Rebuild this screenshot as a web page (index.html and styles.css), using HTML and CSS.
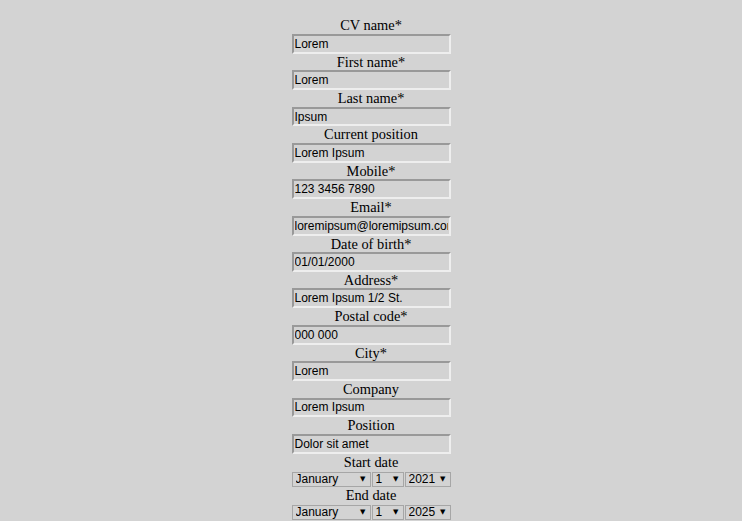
FILE: index.html
```html
<!DOCTYPE html>
<html lang="en">
<head>
<meta charset="utf-8">
<title>CV form</title>
<link rel="stylesheet" href="styles.css">
</head>
<body>
<form class="cv-form">
  <label class="field-label" for="cvname">CV name*</label>
  <input class="field-input" id="cvname" type="text" value="Lorem">
  <label class="field-label" for="firstname">First name*</label>
  <input class="field-input" id="firstname" type="text" value="Lorem">
  <label class="field-label" for="lastname">Last name*</label>
  <input class="field-input" id="lastname" type="text" value="Ipsum">
  <label class="field-label" for="curpos">Current position</label>
  <input class="field-input" id="curpos" type="text" value="Lorem Ipsum">
  <label class="field-label" for="mobile">Mobile*</label>
  <input class="field-input" id="mobile" type="text" value="123 3456 7890">
  <label class="field-label" for="email">Email*</label>
  <input class="field-input" id="email" type="text" value="loremipsum@loremipsum.com">
  <label class="field-label" for="dob">Date of birth*</label>
  <input class="field-input" id="dob" type="text" value="01/01/2000">
  <label class="field-label" for="address">Address*</label>
  <input class="field-input" id="address" type="text" value="Lorem Ipsum 1/2 St.">
  <label class="field-label" for="postal">Postal code*</label>
  <input class="field-input" id="postal" type="text" value="000 000">
  <label class="field-label" for="city">City*</label>
  <input class="field-input" id="city" type="text" value="Lorem">
  <label class="field-label" for="company">Company</label>
  <input class="field-input" id="company" type="text" value="Lorem Ipsum">
  <label class="field-label" for="position">Position</label>
  <input class="field-input" id="position" type="text" value="Dolor sit amet">
  <label class="field-label">Start date</label>
  <div class="date-row">
    <span class="select-wrap month"><select class="date-select"><option>January</option></select></span>
    <span class="select-wrap day"><select class="date-select"><option>1</option></select></span>
    <span class="select-wrap year"><select class="date-select"><option>2021</option></select></span>
  </div>
  <label class="field-label">End date</label>
  <div class="date-row">
    <span class="select-wrap month"><select class="date-select"><option>January</option></select></span>
    <span class="select-wrap day"><select class="date-select"><option>1</option></select></span>
    <span class="select-wrap year"><select class="date-select"><option>2025</option></select></span>
  </div>
</form>
</body>
</html>
```
FILE: styles.css
```css
html, body {
  margin: 0;
  background: #d3d3d3;
}
body {
  padding-top: 17.4px;
  font-family: "Liberation Serif", "Times New Roman", serif;
  color: #000;
}
.cv-form {
  width: 159px;
  margin: 0 auto;
  display: flex;
  flex-direction: column;
}
.field-label {
  display: block;
  font-size: 14.4px;
  line-height: 16.56px;
  text-align: center;
  white-space: nowrap;
}
.field-input {
  box-sizing: border-box;
  width: 159px;
  height: 19.8px;
  margin: 0;
  padding: 0 1px;
  border: 2px solid;
  border-color: #999999 #eeeeee #eeeeee #999999;
  background: transparent;
  font-family: "Liberation Sans", Arial, sans-serif;
  font-size: 12px;
  color: #000;
  outline: none;
}
.date-row {
  display: flex;
  gap: 1px;
  height: 17px;
  padding-top: 1.5px;
  box-sizing: border-box;
}
.select-wrap {
  position: relative;
  display: block;
  height: 15px;
}
.select-wrap.month { width: 79px; }
.select-wrap.day { width: 32px; }
.select-wrap.year { width: 46px; }
.select-wrap::after {
  content: "\25BC";
  position: absolute;
  right: 5px;
  top: 4px;
  font-family: "DejaVu Sans", sans-serif;
  font-size: 7px;
  line-height: 7px;
  color: #000;
  pointer-events: none;
}
.date-select {
  -webkit-appearance: none;
  appearance: none;
  box-sizing: border-box;
  display: block;
  width: 100%;
  height: 15px;
  margin: 0;
  padding: 0 0 0 3px;
  border: 1px solid #a6a6a6;
  border-radius: 0;
  background: transparent;
  font-family: "Liberation Sans", Arial, sans-serif;
  font-size: 12px;
  line-height: 13px;
  color: #000;
  outline: none;
}
```
